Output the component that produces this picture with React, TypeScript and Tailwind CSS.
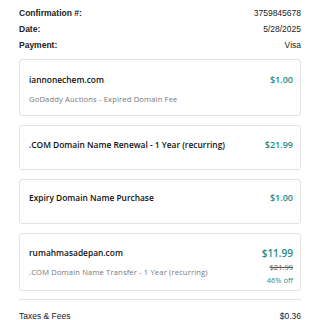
import React from "react";

const teal = "text-[#1f8a8a]";

function Card({
  title,
  sub,
  price,
  extra,
  className,
  priceClass = "text-[9px]",
}: {
  title: string;
  sub?: string;
  price: string;
  extra?: React.ReactNode;
  className: string;
  priceClass?: string;
}) {
  return (
    <div className={`rounded-[3px] border border-[#e3e3e3] pl-[9px] pr-[7px] flex justify-between ${className}`}>
      <div className="flex flex-col">
        <div className="text-[8.4px] leading-[12px] font-semibold text-[#111]">{title}</div>
        {sub && <div className="mt-[7px] text-[7.6px] leading-[12px] tracking-[0.15px] text-[#777]">{sub}</div>}
      </div>
      <div className="flex flex-col items-end">
        <div className={`${priceClass} leading-[12px] font-semibold ${teal}`}>{price}</div>
        {extra}
      </div>
    </div>
  );
}

export default function App() {
  return (
    <div
      className="w-[320px] h-[320px] overflow-hidden bg-white"
      style={{ fontFamily: '"Open Sans", "Noto Sans", sans-serif' }}
    >
      <div className="px-[19px] pt-[7px]">
        <div
          className="flex flex-col gap-[4px] text-[8.5px] leading-[12px] text-[#222]"
          style={{ fontFamily: '"Liberation Sans", Arial, sans-serif' }}
        >
          <div className="flex justify-between">
            <span className="font-bold">Confirmation #:</span>
            <span>3759845678</span>
          </div>
          <div className="flex justify-between">
            <span className="font-bold">Date:</span>
            <span>5/28/2025</span>
          </div>
          <div className="flex justify-between">
            <span className="font-bold">Payment:</span>
            <span>Visa</span>
          </div>
        </div>

        <div className="mt-[8px] flex flex-col gap-[9px]">
          <Card
            className="h-[57px] pt-[14px]"
            title="iannonechem.com"
            sub="GoDaddy Auctions - Expired Domain Fee"
            price="$1.00"
          />
          <Card
            className="h-[45px] pt-[13px]"
            title=".COM Domain Name Renewal - 1 Year (recurring)"
            price="$21.99"
          />
          <Card
            className="h-[45px] pt-[12px]"
            title="Expiry Domain Name Purchase"
            price="$1.00"
          />
          <Card
            className="h-[58px] pt-[13px]"
            title="rumahmasadepan.com"
            sub=".COM Domain Name Transfer - 1 Year (recurring)"
            price="$11.99"
            priceClass="text-[10px]"
            extra={
              <>
                <div className="mt-[3px] text-[7.5px] leading-[10px] text-[#555] line-through">$21.99</div>
                <div className={`mt-[3px] text-[7.5px] leading-[10px] ${teal}`}>46% off</div>
              </>
            }
          />
        </div>

        <div className="mt-[8px] border-t border-[#e3e3e3]" />
        <div
          className="mt-[10px] flex justify-between text-[8.5px] leading-[12px] text-[#222]"
          style={{ fontFamily: '"Liberation Sans", Arial, sans-serif' }}
        >
          <span className="underline">Taxes &amp; Fees</span>
          <span>$0.36</span>
        </div>
      </div>
    </div>
  );
}
